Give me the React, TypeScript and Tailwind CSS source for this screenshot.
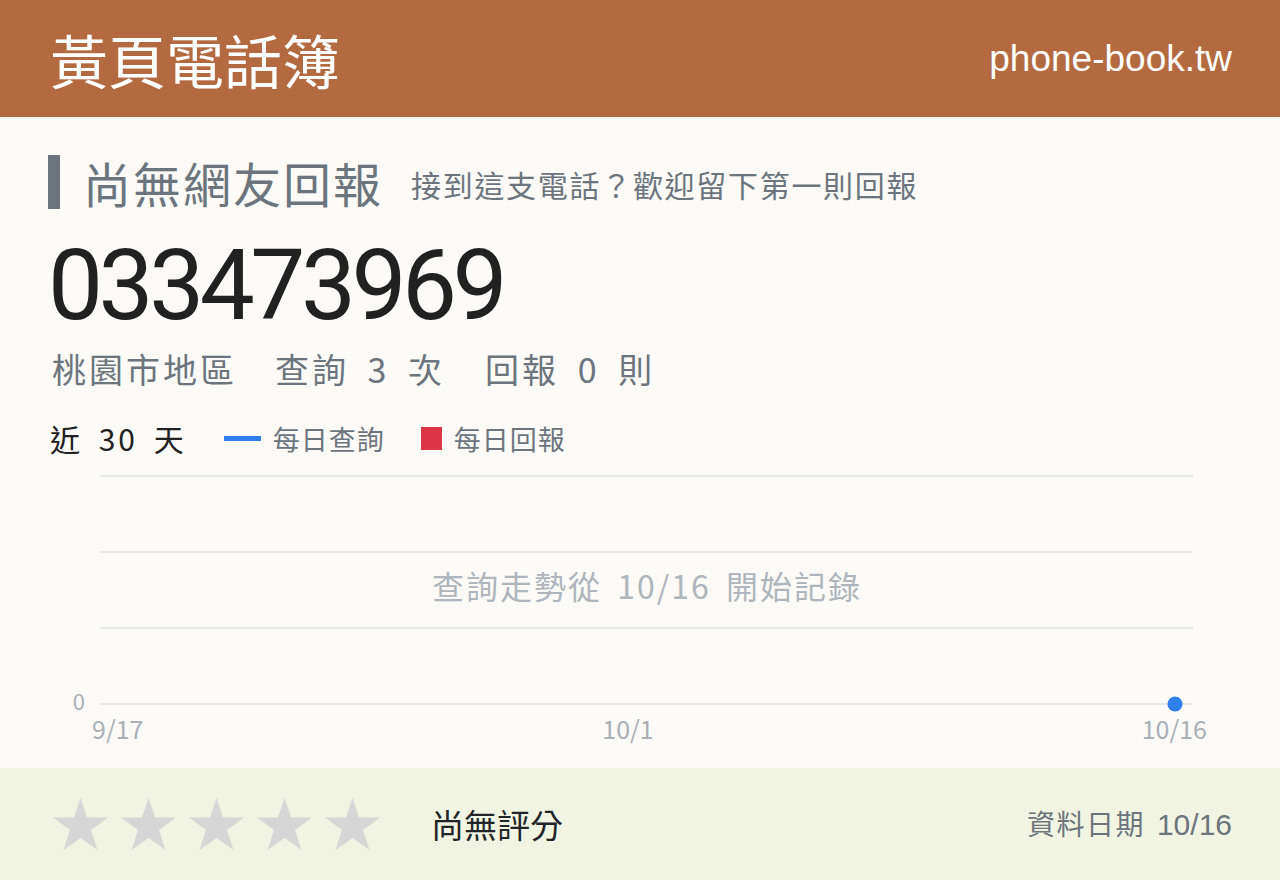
import React from 'react';

const cjk = { fontFamily: '"Noto Sans CJK TC", "Noto Sans", sans-serif' };
const arial = { fontFamily: '"Liberation Sans", "Noto Sans CJK TC", sans-serif' };
const roboto = { fontFamily: 'Roboto, "Noto Sans CJK TC", sans-serif' };

const Star: React.FC = () => (
  <svg width="55" height="52" viewBox="0 0 55 52" className="block">
    <polygon
      points="27.5,0 34,19.5 55,19.5 38,32 44.5,52 27.5,40 10.5,52 17,32 0,19.5 21,19.5"
      fill="#d6d6d6"
    />
  </svg>
);

const TrendChart: React.FC = () => {
  const gridY = [10, 86, 162, 238];
  return (
    <svg width="1280" height="290" viewBox="0 0 1280 290" className="block" style={cjk}>
      {gridY.map(y => (
        <line key={y} x1="100" x2="1193" y1={y} y2={y} stroke="#e7e8ea" strokeWidth="2" />
      ))}
      <text x="85" y="238" textAnchor="end" dominantBaseline="middle" fontSize="22" fill="#a9b0b7">0</text>
      <text x="92" y="273" fontSize="25" fill="#a9b0b7">9/17</text>
      <text x="628" y="273" textAnchor="middle" fontSize="25" fill="#a9b0b7">10/1</text>
      <text x="1207" y="273" textAnchor="end" fontSize="25" fill="#a9b0b7">10/16</text>
      <text x="647" y="124" textAnchor="middle" dominantBaseline="middle" fontSize="32" fill="#aeb5bc" letterSpacing="2" wordSpacing="6">
        查詢走勢從 10/16 開始記錄
      </text>
      <circle cx="1175" cy="238" r="7.5" fill="#2f7fec" />
    </svg>
  );
};

const App: React.FC = () => {
  return (
    <div className="w-[1280px] h-[880px] flex flex-col bg-[#fbfaf6] overflow-hidden" style={cjk}>
      <header className="h-[117px] shrink-0 bg-[#b46a40] flex items-center justify-between pl-[50px] pr-[48px]">
        <h1 className="text-[58px] leading-none text-white">黃頁電話簿</h1>
        <span className="text-[37px] leading-none text-white" style={arial}>phone-book.tw</span>
      </header>

      <main className="flex-1 flex flex-col">
        <div className="px-[48px] pt-[38px] flex flex-col">
          <div className="flex items-center h-[54px]">
            <div className="w-[12px] h-[54px] bg-[#6c757d]" />
            <h2 className="ml-[23px] text-[48px] leading-none text-[#6c757d] tracking-[2px]">尚無網友回報</h2>
            <p className="ml-[28px] mt-[4px] text-[30px] leading-none text-[#6c757d] tracking-[1.7px]">
              接到這支電話？歡迎留下第一則回報
            </p>
          </div>

          <div className="mt-[28px] text-[98px] leading-none text-[#212121] tracking-[-4.5px]" style={roboto}>
            033473969
          </div>

          <div className="mt-[17px] flex items-center text-[34px] leading-none text-[#6c757d] tracking-[3px] [word-spacing:8px]">
            <span className="ml-[4px]">桃園市地區</span>
            <span className="ml-[38px]">查詢 3 次</span>
            <span className="ml-[40px]">回報 0 則</span>
          </div>

          <div className="mt-[37px] flex items-center h-[30px]">
            <span className="ml-[2px] text-[30px] leading-none text-[#212121] tracking-[3px] [word-spacing:6px]">近 30 天</span>
            <span className="ml-[37px] w-[37px] h-[5px] bg-[#2f7fec]" />
            <span className="ml-[12px] text-[27px] leading-none text-[#6c757d] tracking-[1px]">每日查詢</span>
            <span className="ml-[36px] w-[21px] h-[23px] bg-[#dc3545]" />
            <span className="ml-[12px] text-[27px] leading-none text-[#6c757d] tracking-[1px]">每日回報</span>
          </div>
        </div>

        <div className="mt-[13px]">
          <TrendChart />
        </div>
      </main>

      <footer className="h-[112px] shrink-0 bg-[#f1f4e2] flex items-center pl-[53px] pr-[48px]">
        <div className="flex items-center gap-[13px]">
          {[0, 1, 2, 3, 4].map(i => (
            <Star key={i} />
          ))}
        </div>
        <span className="ml-[51px] text-[33px] leading-none text-[#212529]">尚無評分</span>
        <div className="ml-auto flex items-baseline text-[#6c757d]">
          <span className="text-[28px] leading-none tracking-[1.5px]">資料日期</span>
          <span className="ml-[12px] text-[30px] leading-none" style={arial}>10/16</span>
        </div>
      </footer>
    </div>
  );
};

export default App;
